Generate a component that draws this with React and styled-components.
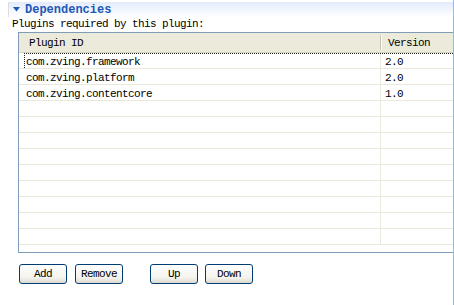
import React from 'react';
import styled, { createGlobalStyle } from 'styled-components';

const GlobalStyle = createGlobalStyle`
  html, body {
    margin: 0;
    padding: 0;
    background: #fff;
  }
  body {
    font-family: 'Liberation Mono', 'DejaVu Sans Mono', monospace;
    font-size: 11px;
    letter-spacing: -0.6px;
    color: #000;
  }
`;

const plugins = [
  { id: 'com.zving.framework', version: '2.0' },
  { id: 'com.zving.platform', version: '2.0' },
  { id: 'com.zving.contentcore', version: '1.0' },
];

const EMPTY_ROWS = 9;

const Page = styled.div`
  width: 454px;
  height: 305px;
  box-sizing: border-box;
  border-right: 1px solid #9cb6ea;
  overflow: hidden;
  display: flex;
  flex-direction: column;
`;

const SectionHeader = styled.div`
  margin: 2px 0 0 8px;
  height: 15px;
  border-left: 1px solid #dcdde3;
  background: linear-gradient(#e3ebfb, #ffffff);
  display: flex;
  align-items: center;
  gap: 5px;
  padding-left: 4px;
`;

const Title = styled.span`
  font-size: 12px;
  font-weight: bold;
  letter-spacing: 0;
  color: #2158b8;
`;

const Label = styled.div`
  margin: 0 0 0 12px;
  height: 14px;
  line-height: 14px;
`;

const Table = styled.div`
  margin: 1px 0 0 18px;
  height: 221px;
  box-sizing: border-box;
  border: 1px solid #7f9db9;
  border-right: none;
  overflow: hidden;
  display: flex;
  flex-direction: column;
`;

const HeaderRow = styled.div`
  height: 20px;
  box-sizing: border-box;
  display: grid;
  grid-template-columns: 361px 1fr;
  background: #ebeadb;
  border-bottom: 1px solid #d6d2c2;
  flex-shrink: 0;
`;

const HeaderCell = styled.div`
  display: flex;
  align-items: center;
  padding-left: ${p => p.$pad}px;
  border-left: ${p => (p.$divider ? '1px solid #c7c5b2' : 'none')};
  box-shadow: ${p => (p.$divider ? 'inset 1px 0 0 #fff' : 'none')};
  margin: ${p => (p.$divider ? '2px 0 2px' : '0')};
`;

const Body = styled.div`
  flex: 1;
  overflow: hidden;
  position: relative;
`;

const Row = styled.div`
  height: 16px;
  box-sizing: border-box;
  display: grid;
  grid-template-columns: 361px 1fr;
  border-bottom: 1px solid #ebe9dc;
  position: relative;
`;

const FocusRing = styled.div`
  position: absolute;
  left: 5px;
  top: 0;
  right: 0;
  bottom: 0;
  border-top: 1px dotted #222;
  border-left: 1px dotted #222;
  pointer-events: none;
`;

const Cell = styled.div`
  display: flex;
  align-items: center;
  padding: 2px 0 0 ${p => p.$pad}px;
  border-left: ${p => (p.$divider ? '1px solid #ebe9dc' : 'none')};
  white-space: nowrap;
`;

const Buttons = styled.div`
  display: flex;
  margin: 11px 0 0 19px;
`;

const Button = styled.button`
  width: 48px;
  height: 20px;
  padding: 0;
  margin-left: ${p => p.$gap || 0}px;
  box-sizing: border-box;
  border: 1px solid #003c74;
  border-radius: 3px;
  background: linear-gradient(#ffffff, #f4f3ee 70%, #dcd9cf);
  font-family: 'Liberation Mono', 'DejaVu Sans Mono', monospace;
  font-size: 11px;
  letter-spacing: -0.6px;
  color: #000;
`;

const Arrow = () => (
  <svg width="7" height="5" viewBox="0 0 7 5">
    <polygon points="0,0 7,0 3.5,4.5" fill="#2158b8" />
  </svg>
);

export default function App() {
  return (
    <>
      <GlobalStyle />
      <Page>
        <SectionHeader>
          <Arrow />
          <Title>Dependencies</Title>
        </SectionHeader>
        <Label>Plugins required by this plugin:</Label>
        <Table>
          <HeaderRow>
            <HeaderCell $pad={10}>Plugin ID</HeaderCell>
            <HeaderCell $pad={7} $divider>Version</HeaderCell>
          </HeaderRow>
          <Body>
            {plugins.map((p, i) => (
              <Row key={p.id}>
                {i === 0 && <FocusRing />}
                <Cell $pad={7}>{p.id}</Cell>
                <Cell $pad={4} $divider>{p.version}</Cell>
              </Row>
            ))}
            {Array.from({ length: EMPTY_ROWS }).map((_, i) => (
              <Row key={i}>
                <Cell />
                <Cell $divider />
              </Row>
            ))}
          </Body>
        </Table>
        <Buttons>
          <Button>Add</Button>
          <Button $gap={8}>Remove</Button>
          <Button $gap={27}>Up</Button>
          <Button $gap={7}>Down</Button>
        </Buttons>
      </Page>
    </>
  );
}
